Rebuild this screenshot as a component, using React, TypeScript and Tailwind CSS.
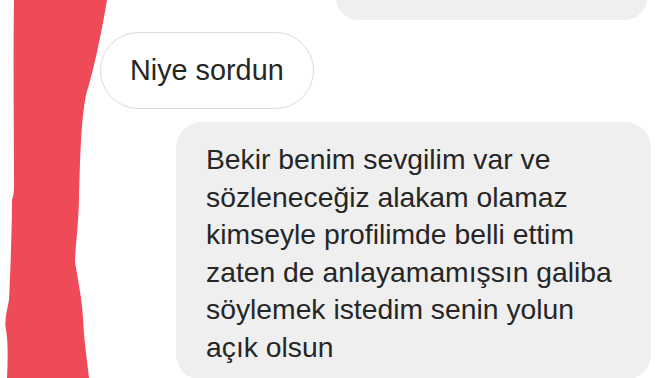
const lines = [
  'Bekir benim sevgilim var ve',
  'sözleneceğiz alakam olamaz',
  'kimseyle profilimde belli ettim',
  'zaten de anlayamamışsın galiba',
  'söylemek istedim senin yolun',
  'açık olsun',
]

function Scribble() {
  return (
    <svg
      className="pointer-events-none absolute left-0 top-0"
      width="120"
      height="378"
      viewBox="0 0 120 378"
    >
      <path
        d="M14 0 L107 0 C102 30 94 70 86 95 C81 120 80 160 79 200 C78 230 75 250 75 262 C78 280 82 300 83 318 C84 340 87 360 89 378 L7 378 C8 360 8 340 6 330 C4 322 7 310 9 300 C11 260 12 220 12 200 C14 194 14 190 14 185 C14 120 13 60 14 0 Z"
        fill="#ee4a58"
      />
    </svg>
  )
}

export default function App() {
  return (
    <div className="relative h-[378px] w-[672px] overflow-hidden bg-white font-['Liberation_Sans',Arial,sans-serif] text-[#262626]">
      <Scribble />
      <div className="flex flex-col">
        <div className="flex justify-end pr-[25px]">
          <div className="-mt-[40px] h-[60px] w-[311px] rounded-[22px] bg-[#efefef]" />
        </div>

        <div className="ml-[100px] mt-[12px] flex">
          <div className="flex h-[77px] items-center rounded-full border border-[#dbdbdb] bg-white pl-[29px] pr-[29px] text-[28.8px]">
            Niye sordun
          </div>
        </div>

        <div className="ml-[176px] mt-[13px] w-[475px] rounded-[26px] bg-[#efefef] pb-[14px] pl-[30px] pt-[19px] text-[28.3px] leading-[37.5px]">
          {lines.map((line) => (
            <div key={line} className="whitespace-nowrap">
              {line}
            </div>
          ))}
        </div>
      </div>
    </div>
  )
}
